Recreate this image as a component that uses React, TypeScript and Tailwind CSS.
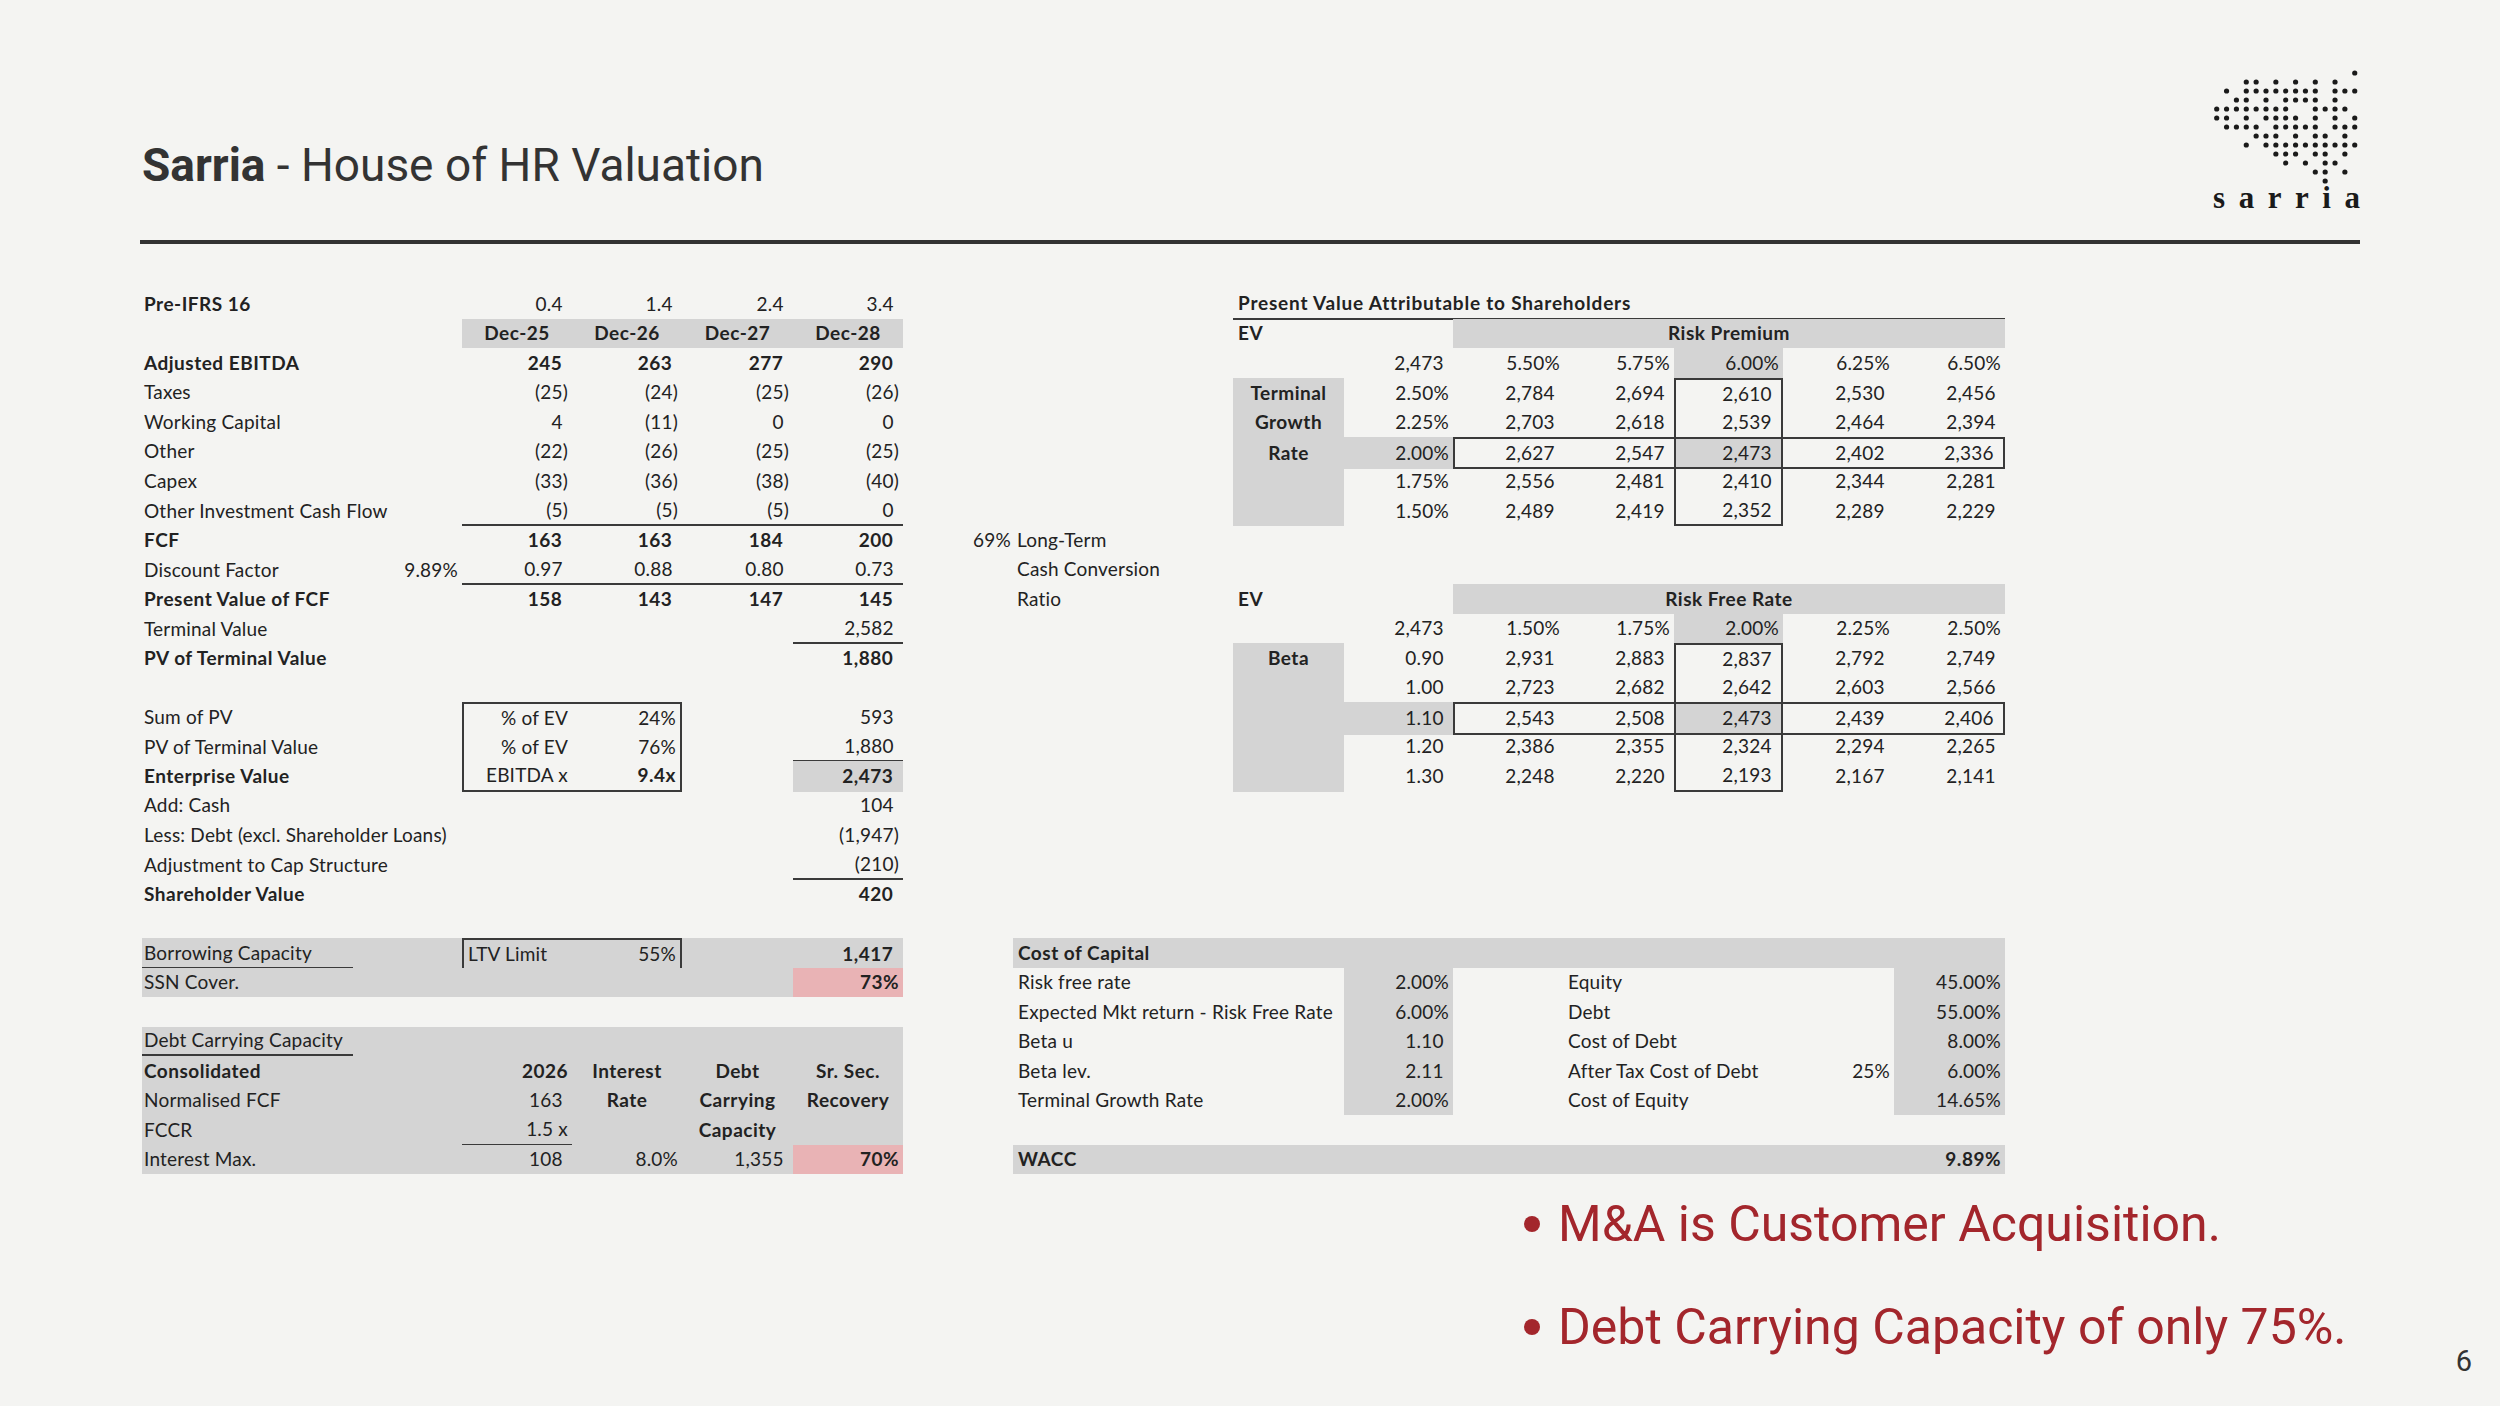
import React from "react";

type CellDef = {
  v?: React.ReactNode;
  k: "l" | "r" | "n" | "c" | "x";
  cls?: string;
};

type RowDef = { cells: CellDef[]; cls?: string };

const G = "bg-[#d4d4d4]";
const PINK = "bg-[#e9b3b5]";
const UL = "border-b-2";
const B = "font-bold tracking-[0.5px]";

const LEFT_COLS =
  "grid h-[29.5px] grid-cols-[238px_82px_110px_110px_111px_110px]";
const RIGHT_COLS =
  "grid h-[29.5px] grid-cols-[53px_220px_111px_109px_111px_110px_109px_111px_111px]";

// left label (small indent), plain text, accounting number, right, centre, empty, custom
const L = (v?: React.ReactNode, cls = ""): CellDef => ({ v, k: "l", cls: `pl-[2px] ${cls}` });
const T = (v?: React.ReactNode, cls = ""): CellDef => ({ v, k: "l", cls });
const N = (v: string, cls = ""): CellDef => ({ v, k: "n", cls });
const R = (v: string, cls = ""): CellDef => ({ v, k: "r", cls });
const C = (v: string, cls = ""): CellDef => ({ v, k: "c", cls });
const E = (cls = ""): CellDef => ({ k: "l", cls });
const X = (v: React.ReactNode, cls = ""): CellDef => ({ v, k: "x", cls });

function Cell({ v, k, cls }: CellDef) {
  const align =
    k === "l"
      ? "justify-start"
      : k === "c"
        ? "justify-center"
        : k === "x"
          ? ""
          : "justify-end pr-[4px]";
  // numbers keep room for the closing bracket, like Excel's accounting format
  const pad = k === "n" && typeof v === "string" && !v.endsWith(")");
  return (
    <div
      className={`flex items-center whitespace-nowrap border-[#3a3a3a] ${align} ${cls ?? ""}`}
    >
      {v}
      {pad && <span className="invisible">)</span>}
    </div>
  );
}

function Rows({ rows, cols }: { rows: RowDef[]; cols: string }) {
  return (
    <div className="flex flex-col">
      {rows.map((r, i) => (
        <div key={i} className={`${cols} ${r.cls ?? ""}`}>
          {r.cells.map((c, j) => (
            <Cell key={j} {...c} />
          ))}
        </div>
      ))}
    </div>
  );
}

function Underlined({ children }: { children: React.ReactNode }) {
  return (
    <span className="flex h-[29.5px] w-[211px] items-center border-b-2 border-[#3a3a3a] pl-[2px]">
      {children}
    </span>
  );
}

const blank: RowDef = { cells: [] };
const four = (v: string[], cls = ""): CellDef[] => v.map((x) => N(x, cls));

const leftRows: RowDef[] = [
  { cells: [L("Pre-IFRS 16", B), E(), ...four(["0.4", "1.4", "2.4", "3.4"])] },
  {
    cells: [
      E(),
      E(),
      C("Dec-25", `${B} ${G}`),
      C("Dec-26", `${B} ${G}`),
      C("Dec-27", `${B} ${G}`),
      C("Dec-28", `${B} ${G}`),
    ],
  },
  { cells: [L("Adjusted EBITDA", B), E(), ...four(["245", "263", "277", "290"], B)] },
  { cells: [L("Taxes"), E(), ...four(["(25)", "(24)", "(25)", "(26)"])] },
  { cells: [L("Working Capital"), E(), ...four(["4", "(11)", "0", "0"])] },
  { cells: [L("Other"), E(), ...four(["(22)", "(26)", "(25)", "(25)"])] },
  { cells: [L("Capex"), E(), ...four(["(33)", "(36)", "(38)", "(40)"])] },
  { cells: [L("Other Investment Cash Flow"), E(), ...four(["(5)", "(5)", "(5)", "0"], UL)] },
  { cells: [L("FCF", B), E(), ...four(["163", "163", "184", "200"], B)] },
  { cells: [L("Discount Factor"), R("9.89%", "pr-[3px]"), ...four(["0.97", "0.88", "0.80", "0.73"], UL)] },
  { cells: [L("Present Value of FCF", B), E(), ...four(["158", "143", "147", "145"], B)] },
  { cells: [L("Terminal Value"), E(), E(), E(), E(), N("2,582", UL)] },
  { cells: [L("PV of Terminal Value", B), E(), E(), E(), E(), N("1,880", B)] },
  blank,
  {
    cells: [
      L("Sum of PV"),
      E(),
      R("% of EV", "border-l-2 border-t-2"),
      R("24%", "border-r-2 border-t-2"),
      E(),
      N("593"),
    ],
  },
  {
    cells: [
      L("PV of Terminal Value"),
      E(),
      R("% of EV", "border-l-2"),
      R("76%", "border-r-2"),
      E(),
      N("1,880", UL),
    ],
  },
  {
    cells: [
      L("Enterprise Value", B),
      E(),
      R("EBITDA x", "border-l-2 border-b-2"),
      R("9.4x", `border-r-2 border-b-2 ${B}`),
      E(),
      N("2,473", `${B} ${G}`),
    ],
  },
  { cells: [L("Add: Cash"), E(), E(), E(), E(), N("104")] },
  { cells: [L("Less: Debt (excl. Shareholder Loans)"), E(), E(), E(), E(), N("(1,947)")] },
  { cells: [L("Adjustment to Cap Structure"), E(), E(), E(), E(), N("(210)", UL)] },
  { cells: [L("Shareholder Value", B), E(), E(), E(), E(), N("420", B)] },
  blank,
  {
    cls: G,
    cells: [
      X(<Underlined>Borrowing Capacity</Underlined>),
      E(),
      X(
        <>
          <span>LTV Limit</span>
          <span>55%</span>
        </>,
        "col-span-2 justify-between border-2 px-[4px]",
      ),
      E(),
      N("1,417", B),
    ],
  },
  { cls: G, cells: [L("SSN Cover."), E(), E(), E(), E(), R("73%", `${B} ${PINK}`)] },
  blank,
  { cls: G, cells: [X(<Underlined>Debt Carrying Capacity</Underlined>)] },
  {
    cls: G,
    cells: [
      L("Consolidated", B),
      E(),
      R("2026", B),
      C("Interest", B),
      C("Debt", B),
      C("Sr. Sec.", B),
    ],
  },
  {
    cls: G,
    cells: [L("Normalised FCF"), E(), N("163"), C("Rate", B), C("Carrying", B), C("Recovery", B)],
  },
  { cls: G, cells: [L("FCCR"), E(), R("1.5 x", UL), E(), C("Capacity", B), E()] },
  {
    cls: G,
    cells: [L("Interest Max."), E(), N("108"), R("8.0%"), N("1,355"), R("70%", `${B} ${PINK}`)],
  },
];

const BOX_V = "border-x-2";
const sens = (
  head: CellDef,
  axis: CellDef,
  vals: string[],
  mode: "top" | "mid" | "hit" | "bottom",
): RowDef => {
  const [a, b, c, d, e] = vals;
  if (mode === "hit") {
    return {
      cells: [
        E(),
        E(),
        head,
        axis,
        N(a, "border-y-2 border-l-2"),
        N(b, "border-y-2"),
        N(c, `border-2 ${G}`),
        N(d, "border-y-2"),
        N(e, "border-y-2 border-r-2"),
      ],
    };
  }
  const mid =
    mode === "top" ? `${BOX_V} border-t-2` : mode === "bottom" ? `${BOX_V} border-b-2` : BOX_V;
  return { cells: [E(), E(), head, axis, N(a), N(b), N(c, mid), N(d), N(e)] };
};

const GH = `${B} ${G}`;

const rightRows: RowDef[] = [
  {
    cells: [
      E(),
      E(),
      T(
        "Present Value Attributable to Shareholders",
        "col-span-7 border-b-2 pl-[5px] font-bold tracking-[0.8px]",
      ),
    ],
  },
  { cells: [E(), E(), T("EV", `pl-[5px] ${B}`), E(), C("Risk Premium", `col-span-5 ${GH}`)] },
  {
    cells: [
      E(),
      E(),
      E(),
      N("2,473"),
      R("5.50%"),
      R("5.75%"),
      R("6.00%", G),
      R("6.25%"),
      R("6.50%"),
    ],
  },
  sens(C("Terminal", GH), R("2.50%"), ["2,784", "2,694", "2,610", "2,530", "2,456"], "top"),
  sens(C("Growth", GH), R("2.25%"), ["2,703", "2,618", "2,539", "2,464", "2,394"], "mid"),
  sens(C("Rate", GH), R("2.00%", G), ["2,627", "2,547", "2,473", "2,402", "2,336"], "hit"),
  sens(E(G), R("1.75%"), ["2,556", "2,481", "2,410", "2,344", "2,281"], "mid"),
  sens(E(G), R("1.50%"), ["2,489", "2,419", "2,352", "2,289", "2,229"], "bottom"),
  { cells: [T("69%", "pl-[13px]"), T("Long-Term", "pl-[4px]")] },
  { cells: [E(), T("Cash Conversion", "pl-[4px]")] },
  {
    cells: [
      E(),
      T("Ratio", "pl-[4px]"),
      T("EV", `pl-[5px] ${B}`),
      E(),
      C("Risk Free Rate", `col-span-5 ${GH}`),
    ],
  },
  {
    cells: [
      E(),
      E(),
      E(),
      N("2,473"),
      R("1.50%"),
      R("1.75%"),
      R("2.00%", G),
      R("2.25%"),
      R("2.50%"),
    ],
  },
  sens(C("Beta", GH), N("0.90"), ["2,931", "2,883", "2,837", "2,792", "2,749"], "top"),
  sens(E(G), N("1.00"), ["2,723", "2,682", "2,642", "2,603", "2,566"], "mid"),
  sens(E(G), N("1.10", G), ["2,543", "2,508", "2,473", "2,439", "2,406"], "hit"),
  sens(E(G), N("1.20"), ["2,386", "2,355", "2,324", "2,294", "2,265"], "mid"),
  sens(E(G), N("1.30"), ["2,248", "2,220", "2,193", "2,167", "2,141"], "bottom"),
  blank,
  blank,
  blank,
  blank,
  blank,
  { cells: [E(), T("Cost of Capital", `col-span-8 pl-[5px] ${GH}`)] },
  ...(
    [
      ["Risk free rate", "2.00%", "Equity", "", "45.00%"],
      ["Expected Mkt return - Risk Free Rate", "6.00%", "Debt", "", "55.00%"],
      ["Beta u", "1.10", "Cost of Debt", "", "8.00%"],
      ["Beta lev.", "2.11", "After Tax Cost of Debt", "25%", "6.00%"],
      ["Terminal Growth Rate", "2.00%", "Cost of Equity", "", "14.65%"],
    ] as const
  ).map(
    ([a, b, c, d, e]): RowDef => ({
      cells: [
        E(),
        T(a, "col-span-2 pl-[5px]"),
        b.endsWith("%") ? R(b, G) : N(b, G),
        E(),
        T(c, "col-span-2 pl-[4px]"),
        d ? R(d) : E(),
        R(e, G),
      ],
    }),
  ),
  blank,
  {
    cells: [
      E(),
      X(
        <>
          <span>WACC</span>
          <span>9.89%</span>
        </>,
        `col-span-8 justify-between pl-[5px] pr-[4px] ${GH}`,
      ),
    ],
  },
];

const DOTS: number[][] = [
  [14],
  [3, 4, 6, 8, 10, 12],
  [1, 3, 4, 5, 6, 7, 8, 9, 10, 12, 13, 14],
  [2, 3, 5, 7, 8, 9, 10, 12],
  [0, 1, 2, 3, 4, 5, 6, 7, 10, 11, 12, 13],
  [0, 1, 3, 5, 6, 7, 8, 10, 12, 14],
  [1, 2, 3, 4, 6, 7, 8, 9, 10, 12, 13, 14],
  [4, 5, 6, 8, 10, 11, 13],
  [3, 5, 6, 7, 8, 9, 10, 11, 12, 13, 14],
  [6, 7, 8, 10, 11, 13],
  [7, 9, 11, 12],
  [10, 11, 13],
  [11],
];

function Logo() {
  return (
    <div className="flex w-[147px] flex-col pt-[68px]">
      <svg width="147" height="116" viewBox="0 0 147 116">
        {DOTS.map((row, r) =>
          row.map((c) => (
            <circle key={`${r}-${c}`} cx={3.7 + c * 9.86} cy={5 + r * 9} r={2.6} fill="#1a1a1a" />
          )),
        )}
      </svg>
      <div className="-mt-[2px] flex justify-between font-['Liberation_Serif',serif] text-[31px] font-bold leading-none text-[#1a1a1a]">
        {"sarria".split("").map((ch, i) => (
          <span key={i}>{ch}</span>
        ))}
      </div>
    </div>
  );
}

export default function App() {
  return (
    <div className="h-[1406px] w-[2500px] overflow-hidden bg-[#f4f4f2] text-[#222]">
      <header className="flex h-[240px] justify-between pl-[142px] pr-[140px]">
        <h1 className="pt-[142px] font-['Roboto',sans-serif] text-[46px] leading-none text-[#333]">
          <span className="font-bold">Sarria</span> - House of HR Valuation
        </h1>
        <Logo />
      </header>
      <div className="mx-[140px] h-[4px] bg-[#333]" />

      <main className="mt-[45px] flex pl-[142px] font-['Lato',sans-serif] text-[19px] tracking-[0.2px]">
        <div className="w-[761px]">
          <Rows rows={leftRows} cols={LEFT_COLS} />
        </div>
        <div className="ml-[57px] w-[1045px]">
          <Rows rows={rightRows} cols={RIGHT_COLS} />
        </div>
      </main>

      <section className="flex">
        <ul className="ml-[1524px] mt-[20px] flex flex-col gap-[43px] font-['Roboto',sans-serif] text-[50px] text-[#a3262c]">
          <li className="flex h-[60px] items-center leading-[60px]">
            <span className="mr-[18px] h-[16px] w-[16px] rounded-full bg-[#a3262c]" />
            M&amp;A is Customer Acquisition.
          </li>
          <li className="flex h-[60px] items-center leading-[60px]">
            <span className="mr-[18px] h-[16px] w-[16px] rounded-full bg-[#a3262c]" />
            Debt Carrying Capacity of only 75%.
          </li>
        </ul>
        <div className="ml-auto mr-[28px] mt-[173px] font-['Roboto',sans-serif] text-[29px] leading-none text-[#333]">
          6
        </div>
      </section>
    </div>
  );
}
